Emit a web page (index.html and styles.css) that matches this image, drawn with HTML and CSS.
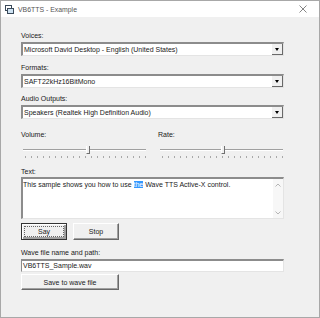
FILE: index.html
```html
<!DOCTYPE html>
<html lang="en">
<head>
  <meta charset="UTF-8">
  <title>VB6TTS - Example</title>
  <link rel="stylesheet" href="styles.css">
</head>
<body>
  <div class="window">
    <div class="titlebar">
      <svg class="app-icon" width="9" height="9" viewBox="0 0 9 9">
        <rect x="0.5" y="0.5" width="6" height="5" fill="#fff" stroke="#3a4a5a"/>
        <rect x="2.5" y="3.5" width="6" height="5" fill="#cfe3f3" stroke="#3a4a5a"/>
      </svg>
      <span class="title">VB6TTS - Example</span>
      <svg class="close" width="8" height="8" viewBox="0 0 8 8">
        <path d="M0.5 0.5 L7.5 7.5 M7.5 0.5 L0.5 7.5" stroke="#777" stroke-width="0.9"/>
      </svg>
    </div>

    <div class="form">
      <div class="field-label first">Voices:</div>
      <div class="combo">
        <span class="combo-text">Microsoft David Desktop - English (United States)</span>
        <span class="combo-btn"><span class="arrow"></span></span>
      </div>

      <div class="field-label">Formats:</div>
      <div class="combo">
        <span class="combo-text">SAFT22kHz16BitMono</span>
        <span class="combo-btn"><span class="arrow"></span></span>
      </div>

      <div class="field-label audio">Audio Outputs:</div>
      <div class="combo">
        <span class="combo-text">Speakers (Realtek High Definition Audio)</span>
        <span class="combo-btn"><span class="arrow"></span></span>
      </div>

      <div class="sliders">
        <div class="slider-col">
          <div class="field-label">Volume:</div>
          <div class="slider">
            <div class="track"></div>
            <div class="thumb" style="left: 63px"></div>
            <div class="ticks"></div>
          </div>
        </div>
        <div class="slider-col">
          <div class="field-label">Rate:</div>
          <div class="slider">
            <div class="track"></div>
            <div class="thumb" style="left: 61px"></div>
            <div class="ticks"></div>
          </div>
        </div>
      </div>

      <div class="field-label text-label">Text:</div>
      <div class="textarea">
        <div class="ta-text">This sample shows you how to use <span class="sel">the</span> Wave TTS Active-X control.</div>
        <div class="ta-scroll">
          <svg width="6" height="4" viewBox="0 0 6 4"><path d="M0.5 3.5 L3 1 L5.5 3.5" fill="none" stroke="#b5b5b5"/></svg>
          <svg width="6" height="4" viewBox="0 0 6 4"><path d="M0.5 0.5 L3 3 L5.5 0.5" fill="none" stroke="#b5b5b5"/></svg>
        </div>
      </div>

      <div class="buttons">
        <button type="button" class="btn btn-focus"><span>Say</span></button>
        <button type="button" class="btn">Stop</button>
      </div>

      <div class="field-label wave-label">Wave file name and path:</div>
      <div class="textbox">VB6TTS_Sample.wav</div>
      <button type="button" class="btn btn-wide">Save to wave file</button>
    </div>
  </div>
</body>
</html>
```

FILE: styles.css
```css
/* styles.css */

body {
  margin: 0;
  padding: 0;
  font-family: "Liberation Sans", Arial, sans-serif;
  font-size: 7px;
  color: #1a1a1a;
}

.window {
  width: 320px;
  height: 318px;
  box-sizing: border-box;
  border: 1px solid #a8a8a8;
  background-color: #f0f0f0;
  overflow: hidden;
}

.titlebar {
  height: 16px;
  background-color: #fff;
  display: flex;
  align-items: center;
  padding-left: 4px;
}

.app-icon {
  margin-right: 4px;
}

.title {
  font-size: 6.9px;
  color: #555;
  flex: 1;
}

.close {
  margin-right: 12px;
}

.form {
  padding-left: 20px;
  width: 263px;
  display: flex;
  flex-direction: column;
}

.field-label {
  height: 10px;
  line-height: 10px;
  margin-top: 7px;
  margin-bottom: 1px;
}

.field-label.first {
  margin-top: 14px;
}

.field-label.audio {
  margin-top: 6px;
}

.combo {
  height: 14px;
  box-sizing: border-box;
  background-color: #fff;
  border-top: 2px solid #8c8c8c;
  border-left: 2px solid #8c8c8c;
  border-right: 1px solid #e4e4e4;
  border-bottom: 1px solid #e4e4e4;
  display: flex;
  align-items: center;
}

.combo-text {
  flex: 1;
  padding-left: 1px;
  white-space: nowrap;
}

.combo-btn {
  width: 11px;
  height: 100%;
  box-sizing: border-box;
  background-color: #f0f0f0;
  border-right: 1px solid #696969;
  border-bottom: 1px solid #696969;
  display: flex;
  align-items: center;
  justify-content: center;
}

.arrow {
  width: 0;
  height: 0;
  border-left: 2.5px solid transparent;
  border-right: 2.5px solid transparent;
  border-top: 3px solid #000;
}

.sliders {
  display: flex;
  gap: 11px;
  margin-top: 4px;
}

.slider-col {
  flex: 1;
}

.slider {
  position: relative;
  height: 20px;
  margin-left: 2px;
  margin-right: 1px;
}

.track {
  position: absolute;
  left: 0;
  right: 0;
  top: 8px;
  height: 1px;
  background-color: #a0a0a0;
  border-bottom: 1px solid #fff;
}

.thumb {
  position: absolute;
  top: 5px;
  width: 2px;
  height: 7px;
  background-color: #f0f0f0;
  border-left: 1px solid #fff;
  border-right: 1px solid #707070;
  border-bottom: 1px solid #707070;
}

.ticks {
  position: absolute;
  left: 2px;
  right: 0;
  top: 15px;
  height: 2px;
  background-image: repeating-linear-gradient(to right, #a8a8a8 0, #a8a8a8 1px, transparent 1px, transparent 6px);
}

.text-label {
  margin-top: 6px;
  margin-bottom: 0;
}

.textarea {
  height: 42px;
  box-sizing: border-box;
  background-color: #fff;
  border-top: 2px solid #8c8c8c;
  border-left: 2px solid #8c8c8c;
  border-right: 1px solid #e4e4e4;
  border-bottom: 1px solid #e4e4e4;
  display: flex;
}

.ta-text {
  flex: 1;
  padding-top: 1px;
  line-height: 9px;
  white-space: nowrap;
}

.sel {
  background-color: #3399ff;
  color: #fff;
}

.ta-scroll {
  width: 10px;
  background-color: #f7f7f7;
  display: flex;
  flex-direction: column;
  justify-content: space-between;
  align-items: center;
  padding: 4px 0 3px;
}

.ta-scroll svg {
  display: block;
}

.buttons {
  display: flex;
  gap: 6px;
  margin-top: 4px;
}

.btn {
  font-family: "Liberation Sans", Arial, sans-serif;
  font-size: 7px;
  color: #1a1a1a;
  width: 46px;
  height: 17px;
  padding: 0;
  background-color: #f0f0f0;
  border-top: 1px solid #fff;
  border-left: 1px solid #fff;
  border-right: 1px solid #696969;
  border-bottom: 1px solid #696969;
  box-shadow: inset -1px -1px 0 #a0a0a0;
}

.btn-focus {
  border: 1px solid #333;
  box-shadow: inset 1px 1px 0 #fff, inset -2px -2px 0 #a0a0a0;
  padding: 2px;
}

.btn-focus span {
  display: flex;
  align-items: center;
  justify-content: center;
  height: 100%;
  outline: 1px dotted #666;
  outline-offset: -1px;
}

.wave-label {
  margin-top: 8px;
}

.textbox {
  height: 13px;
  box-sizing: border-box;
  line-height: 10px;
  padding-left: 1px;
  background-color: #fff;
  border-top: 2px solid #8c8c8c;
  border-left: 1px solid #8c8c8c;
  border-right: 1px solid #e4e4e4;
  border-bottom: 1px solid #e4e4e4;
}

.btn-wide {
  width: 98px;
  height: 16px;
  margin-top: 2px;
}
```
